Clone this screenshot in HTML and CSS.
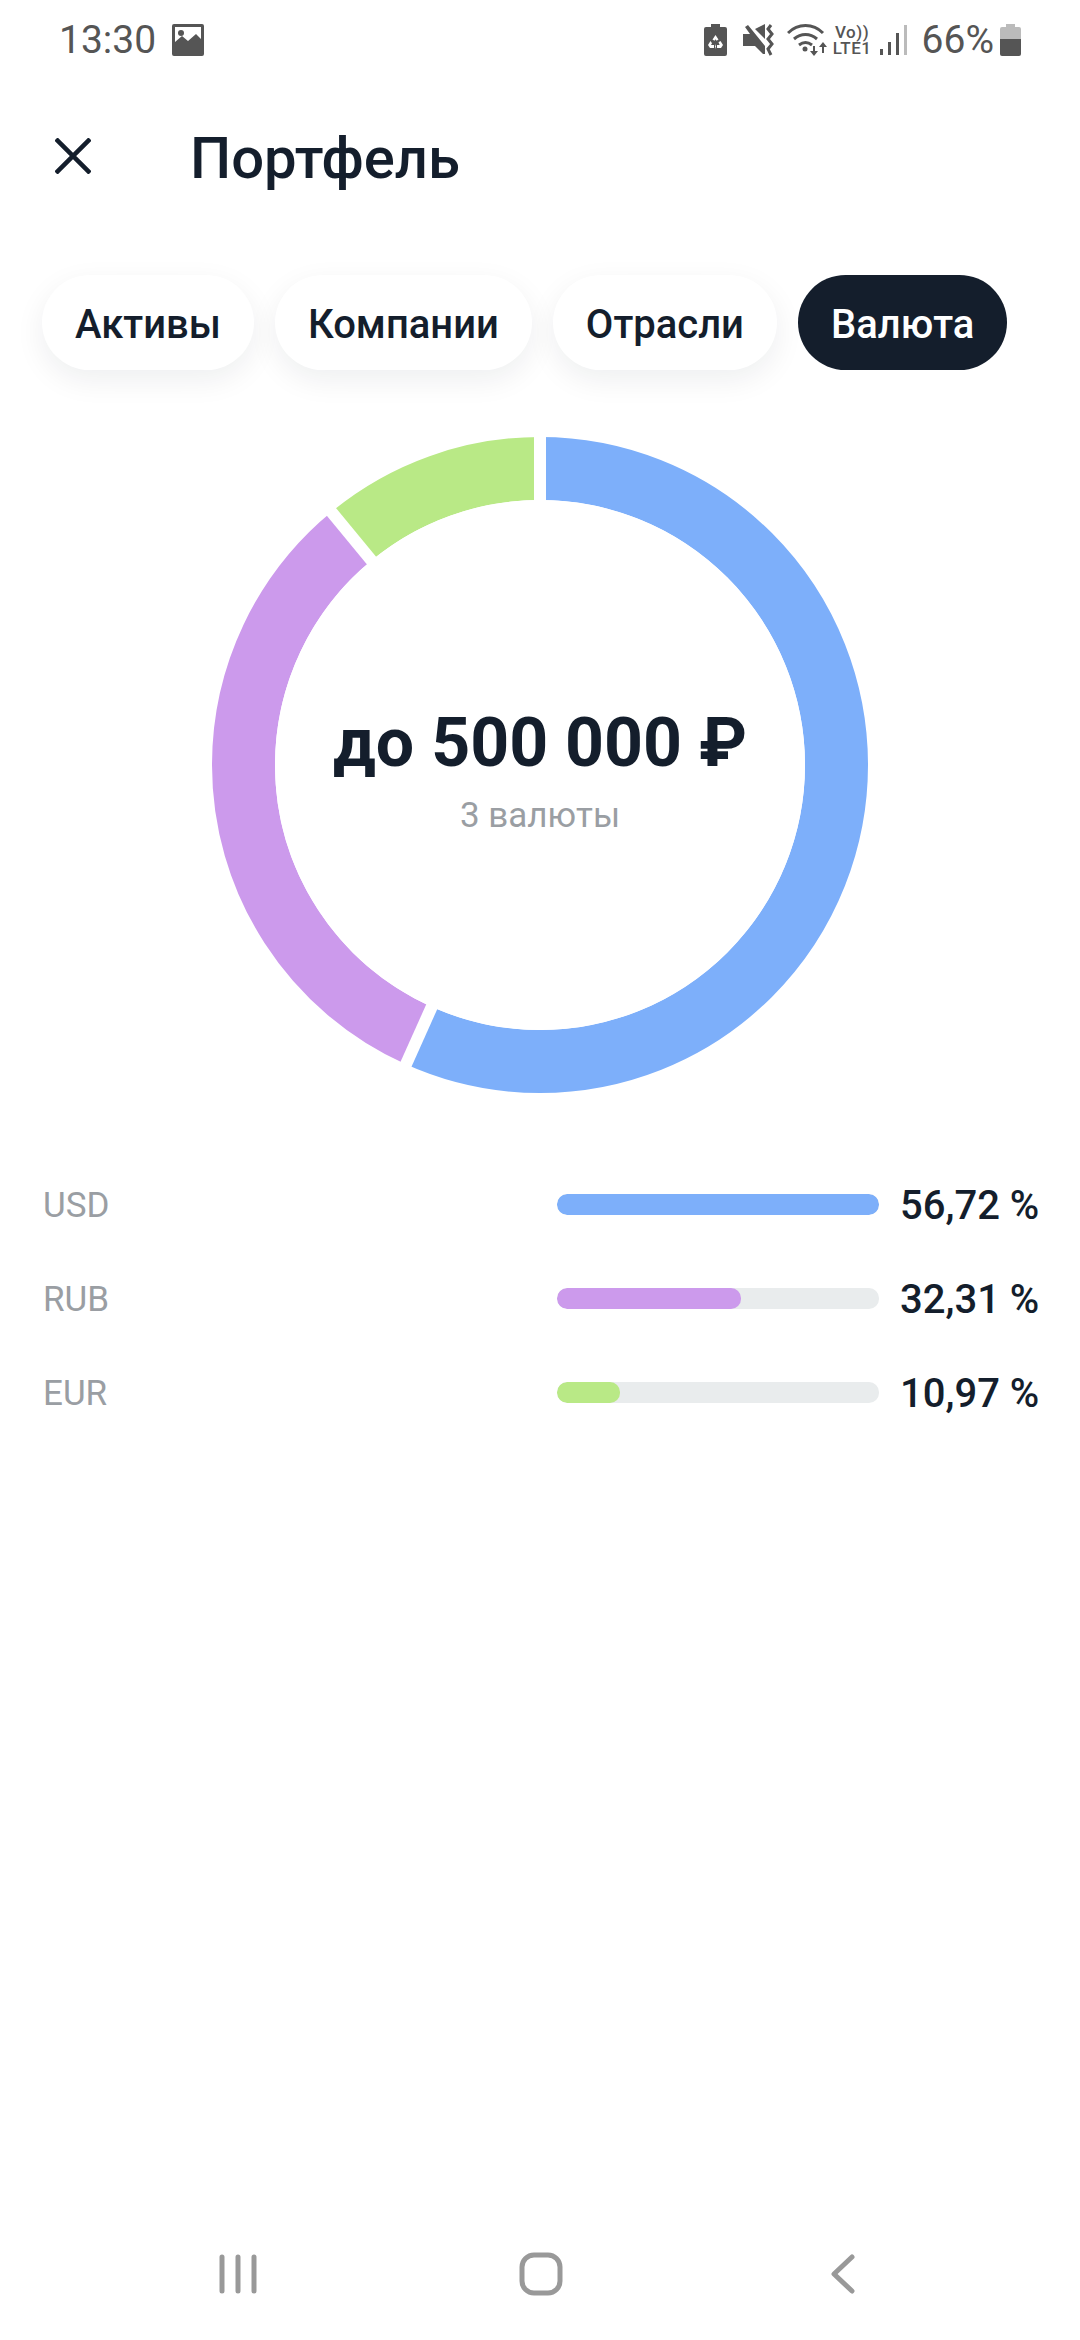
FILE: index.html
```html
<!DOCTYPE html>
<html lang="ru">
<head>
    <meta charset="UTF-8">
    <meta name="viewport" content="width=device-width, initial-scale=1.0">
    <title>Портфель</title>
    <link rel="stylesheet" href="styles.css">
</head>
<body>
    <div class="page">
        <div class="status-bar">
            <div class="status-left">
                <span class="status-time">13:30</span>
                <svg class="icon-picture" viewBox="0 0 32 32">
                    <path fill="#555" fill-rule="evenodd" d="M2 0h28a2 2 0 0 1 2 2v28a2 2 0 0 1-2 2H2a2 2 0 0 1-2-2V2a2 2 0 0 1 2-2zM3 3v15l7-6 6 5 8-7 5 5V3z"/>
                    <circle cx="9" cy="9" r="3" fill="#555"/>
                </svg>
            </div>
            <div class="status-right">
                <svg class="icon-saver" viewBox="0 0 23 32">
                    <path fill="#555" fill-rule="evenodd" d="M7 0h9v3h5a2 2 0 0 1 2 2v25a2 2 0 0 1-2 2H2a2 2 0 0 1-2-2V5a2 2 0 0 1 2-2h5zM11.500 11l-3 4.500 2 1.300 1-1.600 1 1.600 2-1.300zM6.500 17l-2.500 4 2 3h4v-3H7l1-1.800zM16.500 17l-2 1.200 1.200 2.800H13v3h4l2-3zM12 20v5l-1-2.500z"/>
                </svg>
                <svg class="icon-mute" viewBox="0 0 32 32">
                    <path fill="#555" d="M0 10h7L2 3l3-2 17 21v8h-2l-8-8H0z"/>
                    <path fill="#555" d="M12 5l10-5v15z"/>
                    <path fill="none" stroke="#555" stroke-width="3" d="M28 1l-3 4 4 5-4 5 4 5-4 5 3 6"/>
                </svg>
                <svg class="icon-wifi" viewBox="0 0 40 32">
                    <g fill="none" stroke="#555" stroke-width="3">
                        <path d="M1 9c10-10 25-10 35 0"/>
                        <path d="M7 15c7-6 16-6 23 0"/>
                        <path d="M12 21c4-3 9-3 13 0"/>
                    </g>
                    <circle cx="18" cy="25" r="2.500" fill="#555"/>
                    <path fill="#555" d="M26 22h2v5h3l-4 5-4-5h3zM36 18l4 5h-3v6h-2v-6h-3z"/>
                </svg>
                <div class="volte">
                    <span class="volte-top">Vo))</span>
                    <span class="volte-bottom">LTE1</span>
                </div>
                <svg class="icon-signal" viewBox="0 0 27 32">
                    <rect x="0" y="25" width="3" height="6" fill="#555"/>
                    <rect x="8" y="18" width="3" height="13" fill="#555"/>
                    <rect x="16" y="9" width="3" height="22" fill="#555"/>
                    <rect x="24" y="1" width="3" height="30" fill="#bbb"/>
                </svg>
                <span class="status-percent">66%</span>
                <svg class="icon-battery" viewBox="0 0 21 32">
                    <path fill="#bbb" d="M6 0h9v3h4a2 2 0 0 1 2 2v10H0V5a2 2 0 0 1 2-2h4z"/>
                    <path fill="#555" d="M0 15h21v15a2 2 0 0 1-2 2H2a2 2 0 0 1-2-2z"/>
                </svg>
            </div>
        </div>

        <div class="header">
            <svg class="icon-close" viewBox="0 0 36 36">
                <path fill="none" stroke="#141e2c" stroke-width="4.500" d="M1 1l34 34M35 1L1 35"/>
            </svg>
            <h1>Портфель</h1>
        </div>

        <div class="tabs">
            <div class="tab">Активы</div>
            <div class="tab">Компании</div>
            <div class="tab">Отрасли</div>
            <div class="tab tab-active">Валюта</div>
        </div>

        <div class="donut">
            <svg viewBox="0 0 656 656">
                <!-- circumference of r=296.5 is 1863 -->
                <g fill="none" stroke-width="63" transform="rotate(-90 328 328)">
                    <circle cx="328" cy="328" r="296.500" stroke="#7dafFA" stroke-dasharray="1056.700 1863"/>
                    <circle cx="328" cy="328" r="296.500" stroke="#cc9aec" stroke-dasharray="601.900 1863" stroke-dashoffset="-1056.700"/>
                    <circle cx="328" cy="328" r="296.500" stroke="#b9e986" stroke-dasharray="204.400 1863" stroke-dashoffset="-1658.600"/>
                </g>
                <g stroke="#fff" stroke-width="12">
                    <line x1="328" y1="328" x2="328" y2="-4"/>
                    <line x1="328" y1="328" x2="191" y2="634" />
                    <line x1="328" y1="328" x2="117" y2="72" />
                </g>
                <circle cx="328" cy="328" r="265" fill="#fff"/>
            </svg>
            <div class="donut-label">
                <div class="donut-sum">до 500 000 ₽</div>
                <div class="donut-count">3 валюты</div>
            </div>
        </div>

        <div class="legend">
            <div class="legend-row">
                <span class="legend-name">USD</span>
                <div class="bar"><div class="bar-fill fill-usd" style="width: 100%"></div></div>
                <span class="legend-value">56,72 %</span>
            </div>
            <div class="legend-row">
                <span class="legend-name">RUB</span>
                <div class="bar"><div class="bar-fill fill-rub" style="width: 57%"></div></div>
                <span class="legend-value">32,31 %</span>
            </div>
            <div class="legend-row">
                <span class="legend-name">EUR</span>
                <div class="bar"><div class="bar-fill fill-eur" style="width: 19.5%"></div></div>
                <span class="legend-value">10,97 %</span>
            </div>
        </div>

        <div class="nav-bar">
            <svg class="nav-recent" viewBox="0 0 38 40">
                <path fill="none" stroke="#999" stroke-width="5" stroke-linecap="round" d="M3 3v34M19 3v34M35 3v34"/>
            </svg>
            <svg class="nav-home" viewBox="0 0 44 44">
                <rect x="3" y="3" width="38" height="38" rx="12" fill="none" stroke="#999" stroke-width="5"/>
            </svg>
            <svg class="nav-back" viewBox="0 0 24 40">
                <path fill="none" stroke="#999" stroke-width="5" stroke-linecap="round" stroke-linejoin="round" d="M21 3L3 20l18 17"/>
            </svg>
        </div>
    </div>
</body>
</html>
```

FILE: styles.css
```css
* {
    margin: 0;
    padding: 0;
    box-sizing: border-box;
}

body {
    font-family: Roboto, 'Noto Sans', sans-serif;
    background-color: #fff;
    color: #141e2c;
}

.page {
    height: 2340px;
    display: flex;
    flex-direction: column;
    overflow: hidden;
}

/* status bar */
.status-bar {
    height: 80px;
    padding: 0 59px;
    display: flex;
    justify-content: space-between;
    align-items: center;
    color: #555;
}

.status-left,
.status-right {
    display: flex;
    align-items: center;
}

.status-time {
    font-size: 39px;
    margin-right: 16px;
}

.icon-picture {
    width: 32px;
    height: 32px;
}

.icon-saver {
    width: 23px;
    height: 32px;
    margin-right: 16px;
}

.icon-mute {
    width: 32px;
    height: 32px;
    margin-right: 12px;
}

.icon-wifi {
    width: 40px;
    height: 32px;
    margin-right: 6px;
}

.volte {
    width: 39px;
    display: flex;
    flex-direction: column;
    font-size: 17px;
    font-weight: 500;
    letter-spacing: 0.5px;
    line-height: 16px;
    text-align: center;
    margin-right: 8px;
}

.icon-signal {
    width: 27px;
    height: 32px;
    margin-right: 15px;
}

.status-percent {
    font-size: 39px;
    margin-right: 6px;
}

.icon-battery {
    width: 21px;
    height: 32px;
}

/* header */
.header {
    height: 80px;
    margin-top: 38px;
    padding-left: 55px;
    display: flex;
    align-items: center;
}

.icon-close {
    width: 36px;
    height: 36px;
    margin: 0 99px 4px 0;
}

.header h1 {
    font-size: 58px;
    font-weight: 500;
}

/* tabs */
.tabs {
    margin-top: 77px;
    padding-left: 42px;
    display: flex;
    gap: 21px;
}

.tab {
    height: 95px;
    padding: 4px 33px 0;
    border-radius: 48px;
    background-color: #fff;
    box-shadow: 0 10px 30px rgba(20, 30, 44, 0.07);
    font-size: 40px;
    font-weight: 500;
    line-height: 91px;
}

.tab-active {
    background-color: #141e2c;
    color: #fff;
    box-shadow: none;
}

/* donut */
.donut {
    position: relative;
    width: 656px;
    height: 656px;
    margin: 67px auto 0;
}

.donut svg {
    display: block;
    overflow: visible;
}

.donut-label {
    position: absolute;
    top: 0;
    left: 0;
    right: 0;
    bottom: 0;
    display: flex;
    flex-direction: column;
    justify-content: center;
    align-items: center;
}

.donut-sum {
    font-size: 68px;
    font-weight: 700;
    margin-top: 8px;
}

.donut-count {
    font-size: 35px;
    color: #9a9ea3;
    margin-top: 12px;
}

/* legend */
.legend {
    margin-top: 90px;
    padding: 0 37px 0 43px;
    display: flex;
    flex-direction: column;
    gap: 50px;
}

.legend-row {
    height: 44px;
    display: flex;
    align-items: center;
}

.legend-name {
    width: 514px;
    font-size: 35px;
    color: #9a9ea3;
}

.bar {
    width: 322px;
    height: 21px;
    margin-bottom: 2px;
    border-radius: 10px;
    background-color: #e9eced;
    overflow: hidden;
}

.bar-fill {
    height: 100%;
    border-radius: 10px;
}

.fill-usd {
    background-color: #7dafFA;
}

.fill-rub {
    background-color: #cc9aec;
}

.fill-eur {
    background-color: #b9e986;
}

.legend-value {
    margin-left: 21px;
    font-size: 40px;
    font-weight: 500;
    white-space: nowrap;
}

/* android nav */
.nav-bar {
    margin-top: auto;
    margin-bottom: 44px;
    position: relative;
    height: 44px;
    display: flex;
    align-items: center;
    padding-left: 219px;
}

.nav-recent {
    width: 38px;
    height: 40px;
}

.nav-home {
    width: 44px;
    height: 44px;
    margin-left: 262px;
}

.nav-back {
    width: 24px;
    height: 40px;
    margin-left: 268px;
}
```
